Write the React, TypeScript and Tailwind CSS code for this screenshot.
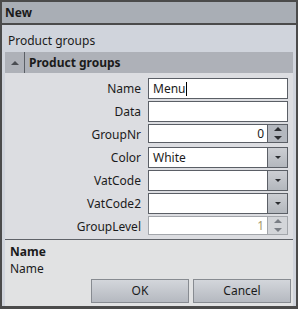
import React from 'react';

const font = { fontFamily: '"Noto Sans", "Open Sans", sans-serif' };

const Arrow = ({ dir, muted, w = 8 }: { dir: 'up' | 'down'; muted?: boolean; w?: number }) => (
  <svg width={w} height={w / 2} viewBox="0 0 8 4">
    <path d={dir === 'up' ? 'M0 4 L4 0 L8 4 Z' : 'M0 0 L8 0 L4 4 Z'} fill={muted ? '#7a7e85' : '#2b2d31'} />
  </svg>
);

const TextBox = ({ value, caret }: { value?: string; caret?: boolean }) => (
  <div className="h-[21px] w-full bg-white border border-[#5b5f66] flex items-center px-[4px] text-[12px] text-[#1b1b1b]">
    {value}
    {caret && <span className="inline-block w-px h-[14px] bg-black ml-px" />}
  </div>
);

const NumBox = ({ value, disabled }: { value: string; disabled?: boolean }) => (
  <div
    className={`h-[19px] w-full bg-white border flex ${disabled ? 'border-[#a3a6ab]' : 'border-[#5b5f66]'}`}
  >
    <div className={`flex-1 text-right pr-[3px] text-[12px] leading-[17px] ${disabled ? 'text-[#a89a6a]' : 'text-[#1b1b1b]'}`}>
      {value}
    </div>
    <div
      className={`w-[20px] flex flex-col border-l ${disabled ? 'border-[#a3a6ab] bg-[#d3d5d9]' : 'border-[#5b5f66] bg-[#b4b8bf]'}`}
    >
      <div className="flex-1 flex items-center justify-center">
        <Arrow dir="up" muted={disabled} />
      </div>
      <div className="flex-1 flex items-center justify-center">
        <Arrow dir="down" muted={disabled} />
      </div>
    </div>
  </div>
);

const Combo = ({ value }: { value?: string }) => (
  <div className="h-[21px] w-full bg-white border border-[#5b5f66] flex">
    <div className="flex-1 px-[4px] text-[12px] leading-[19px] text-[#1b1b1b]">{value}</div>
    <div className="w-[20px] border-l border-[#5b5f66] bg-gradient-to-b from-[#ccced3] to-[#b3b7bd] flex items-center justify-center">
      <Arrow dir="down" w={6} />
    </div>
  </div>
);

export default function App() {
  const rows: { label: string; field: React.ReactNode }[] = [
    { label: 'Name', field: <TextBox value="Menu" caret /> },
    { label: 'Data', field: <TextBox /> },
    { label: 'GroupNr', field: <NumBox value="0" /> },
    { label: 'Color', field: <Combo value="White" /> },
    { label: 'VatCode', field: <Combo /> },
    { label: 'VatCode2', field: <Combo /> },
    { label: 'GroupLevel', field: <NumBox value="1" disabled /> },
  ];

  return (
    <div className="w-[298px] h-[309px] bg-[#4b4b4b] p-[2px] pb-[3px] flex flex-col text-[#1b1b1b]" style={font}>
      <div className="h-[21px] bg-[#a9aeb5] px-[3px] flex items-center text-[12px] font-bold">New</div>
      <div className="h-[2px]" />
      <div className="flex-1 bg-[#d0d4dc] px-[3px] flex flex-col">
        <div className="h-[26px] flex items-end pb-[1px] px-[3px] text-[12px]">Product groups</div>
        <div className="h-[21px] mt-[1px] bg-[#aeb1b8] flex items-center">
          <div className="w-[20px] h-full flex items-center justify-center border-r border-[#5b5f66]">
            <svg width="8" height="4" viewBox="0 0 8 4">
              <path d="M0 4 L4 0 L8 4 Z" fill="#4a4d52" />
            </svg>
          </div>
          <div className="pl-[4px] text-[12px] font-bold">Product groups</div>
        </div>
        <div className="bg-[#dcdde1] pt-[5px] flex flex-col h-[166px]">
          {rows.map((r) => (
            <div key={r.label} className="h-[23px] flex items-start">
              <div className="w-[143px] pr-[7px] text-right text-[12px] leading-[21px]">{r.label}</div>
              <div className="w-[140px]">{r.field}</div>
            </div>
          ))}
        </div>
        <div className="h-px bg-[#5f6268]" />
        <div className="flex-1 bg-[#e1e2e3] flex flex-col pl-[5px] pr-[2px]">
          <div className="mt-[4px] text-[12px] font-bold leading-[16px]">Name</div>
          <div className="mt-[1px] text-[12px] leading-[16px]">Name</div>
          <div className="mt-[2px] flex justify-end gap-[4px]">
            {['OK', 'Cancel'].map((b) => (
              <div
                key={b}
                className="w-[98px] h-[24px] border border-[#878b91] bg-gradient-to-b from-[#d3d6db] to-[#b5b9c0] flex items-center justify-center text-[12px]"
              >
                {b}
              </div>
            ))}
          </div>
        </div>
      </div>
    </div>
  );
}
